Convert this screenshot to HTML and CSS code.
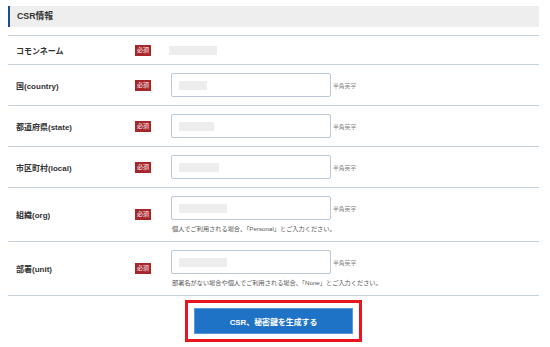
FILE: index.html
```html
<!DOCTYPE html>
<html lang="ja">

<head>
    <title>CSR情報</title>
    <meta charset="UTF-8">
    <link rel="stylesheet" href="styles.css">
</head>

<body>
    <div class="csr-wrap">
        <h2 class="csr-title">CSR情報</h2>
        <div class="csr-list">
            <div class="csr-row">
                <div class="csr-label">コモンネーム</div>
                <div class="csr-req"><span class="badge">必須</span></div>
                <div class="csr-field">
                    <span class="mask mask-cn"></span>
                </div>
            </div>
            <div class="csr-row">
                <div class="csr-label">国(country)</div>
                <div class="csr-req"><span class="badge">必須</span></div>
                <div class="csr-field">
                    <div class="field-line">
                        <div class="input-box"><span class="mask" style="width:28px"></span></div>
                        <span class="hint">半角英字</span>
                    </div>
                </div>
            </div>
            <div class="csr-row">
                <div class="csr-label">都道府県(state)</div>
                <div class="csr-req"><span class="badge">必須</span></div>
                <div class="csr-field">
                    <div class="field-line">
                        <div class="input-box"><span class="mask" style="width:35px"></span></div>
                        <span class="hint">半角英字</span>
                    </div>
                </div>
            </div>
            <div class="csr-row">
                <div class="csr-label">市区町村(local)</div>
                <div class="csr-req"><span class="badge">必須</span></div>
                <div class="csr-field">
                    <div class="field-line">
                        <div class="input-box"><span class="mask" style="width:40px"></span></div>
                        <span class="hint">半角英字</span>
                    </div>
                </div>
            </div>
            <div class="csr-row">
                <div class="csr-label">組織(org)</div>
                <div class="csr-req"><span class="badge">必須</span></div>
                <div class="csr-field">
                    <div class="field-line">
                        <div class="input-box"><span class="mask" style="width:48px"></span></div>
                        <span class="hint">半角英字</span>
                    </div>
                    <p class="note">個人でご利用される場合、「Personal」とご入力ください。</p>
                </div>
            </div>
            <div class="csr-row">
                <div class="csr-label">部署(unit)</div>
                <div class="csr-req"><span class="badge">必須</span></div>
                <div class="csr-field">
                    <div class="field-line">
                        <div class="input-box"><span class="mask" style="width:48px"></span></div>
                        <span class="hint">半角英字</span>
                    </div>
                    <p class="note">部署名がない場合や個人でご利用される場合、「None」とご入力ください。</p>
                </div>
            </div>
        </div>
        <div class="csr-action">
            <div class="highlight">
                <button type="button" class="gen-btn">CSR、秘密鍵を生成する</button>
            </div>
        </div>
    </div>
</body>

</html>
```

FILE: styles.css
```css
body {
    margin: 0;
    background: #fff;
    font-family: "Liberation Sans", "Noto Sans CJK JP", sans-serif;
    color: #333;
}

.csr-wrap {
    margin: 6px 11px 0 8px;
}

.csr-title {
    margin: 0;
    height: 21px;
    line-height: 21px;
    padding-left: 7px;
    background: #eeeeee;
    border-left: 2px solid #1b4f93;
    font-size: 8.8px;
    font-weight: bold;
    color: #333;
}

.csr-list {
    margin-top: 8px;
    border-top: 1px solid #c5d1dc;
}

.csr-row {
    display: flex;
    align-items: center;
    padding: 8px 0;
    min-height: 12px;
    border-bottom: 1px solid #c5d1dc;
}

.csr-label {
    width: 119px;
    padding-left: 8px;
    font-size: 8px;
    font-weight: bold;
    color: #333;
}

.csr-req {
    width: 34px;
    display: flex;
}

.badge {
    display: block;
    width: 16px;
    height: 11px;
    line-height: 11px;
    background: #a7262a;
    color: #fff;
    font-size: 6px;
    text-align: center;
}

.csr-field {
    flex: 1;
}

.mask {
    display: block;
    height: 9px;
    background: #ededed;
}

.mask-cn {
    width: 48px;
}

.field-line {
    display: flex;
    align-items: center;
    padding-left: 2px;
}

.input-box {
    box-sizing: border-box;
    width: 160px;
    height: 24px;
    border: 1px solid #b9c9d9;
    border-radius: 2px;
    padding: 7px 0 0 7px;
    background: #fff;
}

.hint {
    margin-left: 2px;
    font-size: 5.8px;
    color: #888;
}

.note {
    margin: 4px 0 0 3px;
    font-size: 6.2px;
    line-height: 9px;
    color: #555;
}

.csr-action {
    display: flex;
    justify-content: center;
    padding-top: 4px;
}

.highlight {
    border: 3px solid #e8141e;
    padding: 5px 6px;
}

.gen-btn {
    display: block;
    width: 159px;
    height: 26px;
    border: 1px solid #5a98d8;
    background: #1f73c6;
    color: #fff;
    font-family: "Liberation Sans", "Noto Sans CJK JP", sans-serif;
    font-size: 7.9px;
    font-weight: bold;
    cursor: pointer;
}
```
